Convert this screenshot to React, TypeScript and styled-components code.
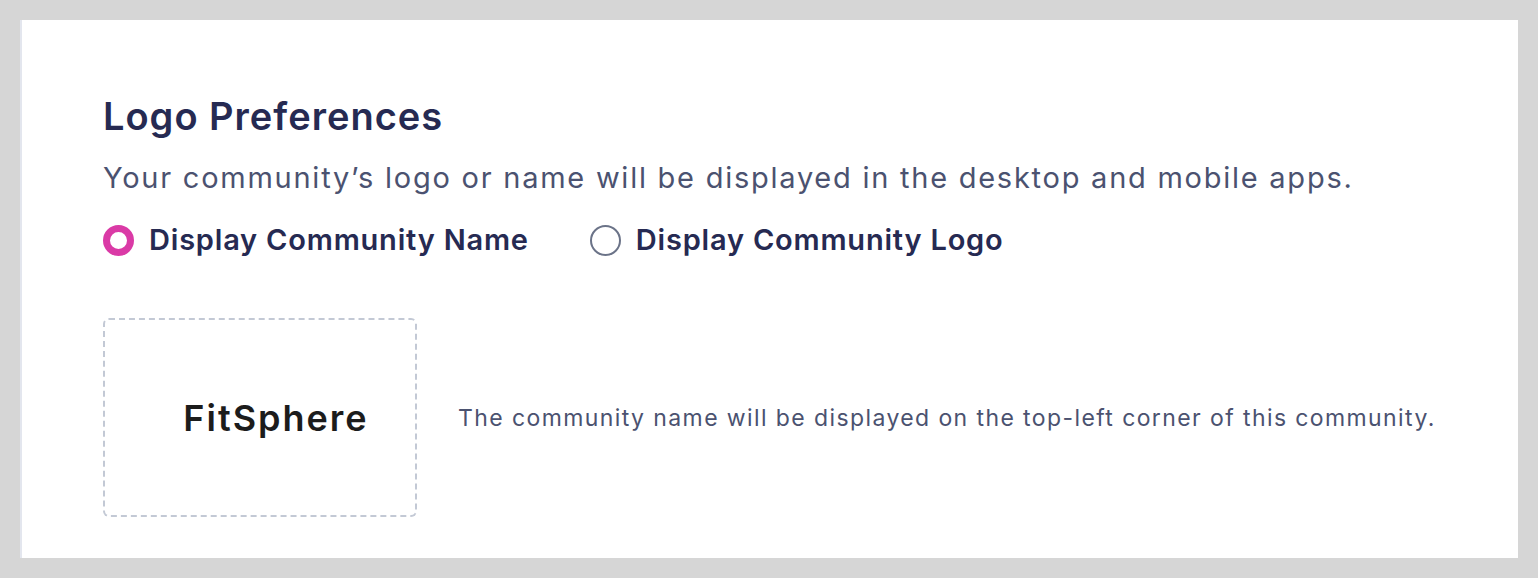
import styled, { createGlobalStyle } from "styled-components";

const GlobalStyle = createGlobalStyle`
  html, body {
    margin: 0;
    padding: 0;
    background: #d6d6d6;
    font-family: Inter, "Noto Sans", sans-serif;
  }
`;

const Page = styled.div`
  padding: 20px;
  height: 578px;
  box-sizing: border-box;
`;

const Panel = styled.section`
  background: #ffffff;
  border-left: 2px solid #e3e6ee;
  height: 538px;
  box-sizing: border-box;
  padding: 74px 81px 0 81px;
`;

const Title = styled.h2`
  margin: 0;
  font-size: 38px;
  line-height: 44px;
  letter-spacing: 1px;
  font-weight: 600;
  color: #262a52;
`;

const Description = styled.p`
  margin: 22px 0 0;
  font-size: 29px;
  line-height: 36px;
  letter-spacing: 1.75px;
  color: #4b5270;
`;

const RadioRow = styled.div`
  display: flex;
  align-items: center;
  gap: 61px;
  margin-top: 26px;
`;

const RadioOption = styled.label`
  display: flex;
  align-items: center;
  gap: 15px;
  font-size: 29px;
  line-height: 36px;
  letter-spacing: 0.8px;
  font-weight: 600;
  color: #262a52;
  cursor: pointer;
`;

const RadioDot = styled.span<{ $checked?: boolean }>`
  width: 31px;
  height: 31px;
  border-radius: 50%;
  box-sizing: border-box;
  border: ${(p) => (p.$checked ? "7px solid #da3aa6" : "2px solid #6b7388")};
  background: #ffffff;
  flex-shrink: 0;
`;

const PreviewRow = styled.div`
  display: flex;
  align-items: center;
  gap: 41px;
  margin-top: 60px;
`;

const LogoBox = styled.div`
  width: 314px;
  height: 199px;
  box-sizing: border-box;
  border: 2px dashed #c3c9d5;
  border-radius: 6px;
  display: flex;
  align-items: center;
  justify-content: center;
  padding-left: 32px;
`;

const LogoName = styled.span`
  font-size: 36px;
  letter-spacing: 2px;
  font-weight: 600;
  color: #1c1c1c;
`;

const Caption = styled.p`
  margin: 0;
  font-size: 23px;
  letter-spacing: 1.4px;
  color: #4b5270;
`;

export default function App(): JSX.Element {
  return (
    <>
      <GlobalStyle />
      <Page>
        <Panel>
          <Title>Logo Preferences</Title>
          <Description>
            Your community’s logo or name will be displayed in the desktop and mobile apps.
          </Description>
          <RadioRow>
            <RadioOption>
              <RadioDot $checked />
              Display Community Name
            </RadioOption>
            <RadioOption>
              <RadioDot />
              Display Community Logo
            </RadioOption>
          </RadioRow>
          <PreviewRow>
            <LogoBox>
              <LogoName>FitSphere</LogoName>
            </LogoBox>
            <Caption>
              The community name will be displayed on the top-left corner of this community.
            </Caption>
          </PreviewRow>
        </Panel>
      </Page>
    </>
  );
}
